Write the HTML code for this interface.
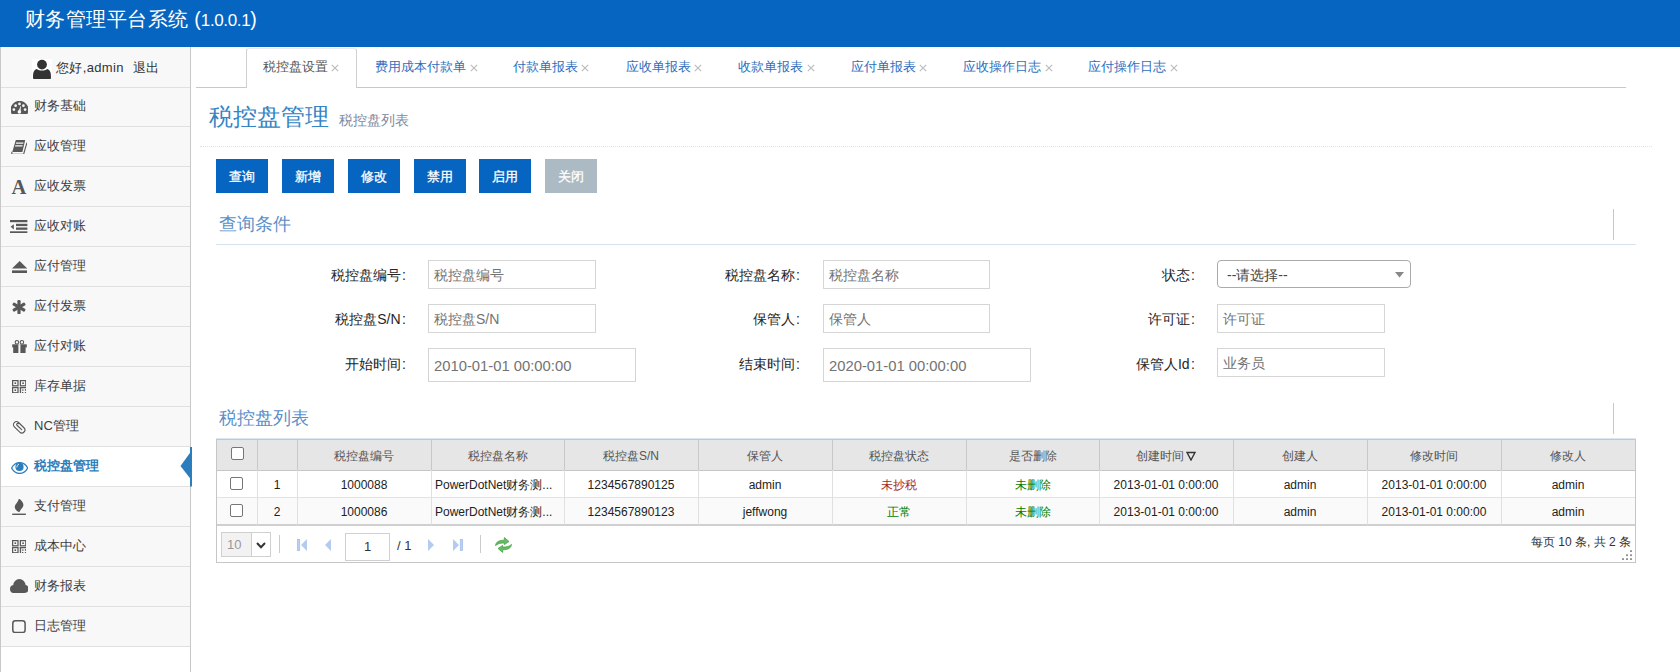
<!DOCTYPE html>
<html><head><meta charset="utf-8">
<style>
*{box-sizing:border-box;margin:0;padding:0}
html,body{width:1680px;height:672px;overflow:hidden;background:#fff;font-family:"Liberation Sans",sans-serif;font-size:13px;color:#393939}
.abs{position:absolute}
#hdr{position:absolute;left:0;top:0;width:1680px;height:47px;background:#0665c0}
#hdr .t{position:absolute;left:25px;top:7px;color:#fff;font-size:20.4px;line-height:24px;white-space:nowrap}
#hdr .t .cjk{letter-spacing:0.45px}
#hdr .t .ver{font-size:17px;letter-spacing:-0.35px}
#hdr .t .p{font-size:19.5px;letter-spacing:0}
#side{position:absolute;left:0;top:47px;width:191px;height:625px;background:#fff;border-left:1px solid #c8c8c8;border-right:1px solid #c8c8c8}
.user{position:absolute;left:0;top:0;width:189px;height:41px;background:#f8f8f8;border-bottom:1px solid #e0e0e0}
.mi{position:absolute;left:0;width:189px;height:40px;background:#f8f8f8;border-bottom:1px solid #e0e0e0;color:#3e3e3e}
.mi .tx{position:absolute;left:33px;top:12px;line-height:14px;font-size:13px;white-space:nowrap}
.mi svg{position:absolute;left:9px;top:12px}
.mi.act{background:#fff;color:#2b7dbc;font-weight:bold}
#tabs{position:absolute;left:196px;top:47px;width:1430px;height:41px;border-bottom:1px solid #c5c5c5}
.tab{position:absolute;top:1px;height:40px;white-space:nowrap;color:#2b6fc0;font-size:13px;line-height:14px}
.tab .tx{position:absolute;top:13px}
.tab .x{position:absolute;top:12px;color:#b8b8b8;font-size:13px}
.tab.act{border:1px solid #c5c5c5;border-bottom:1px solid #fff;border-radius:3px 3px 0 0;background:#fff;color:#555}
.ph{position:absolute;left:209px;top:103px;color:#3584c4;font-size:24px;line-height:28px;white-space:nowrap}
.ph small{font-size:14px;color:#8089a0;margin-left:10px}
.dot{position:absolute;left:200px;top:146px;width:1452px;border-top:1px dotted #e2e2e2}
.btn{position:absolute;top:159px;width:52px;height:34px;background:#0665c0;color:#fff;text-align:center;line-height:35px;font-size:13px}
.btn{-webkit-text-stroke:0.3px #fff}
.btn.dis{background:#abbac3}
.hd{position:absolute;left:219px;color:#5a8fc9;font-size:18px;line-height:22px;white-space:nowrap}
.hline{position:absolute;left:216px;width:1420px;border-top:1px solid #d5e3ef}
.vline{position:absolute;left:1614px;width:1px;background:#c8c8c8}
.lbl{position:absolute;white-space:nowrap;text-align:right;color:#262626;font-size:14px;line-height:16px}
.inp{position:absolute;border:1px solid #d5d5d5;background:#fff;color:#737373;font-size:14px;line-height:16px;padding-left:5px;white-space:nowrap}
.ico{position:absolute;line-height:0}
.ico svg{display:block}
.av{position:absolute;left:31px;top:12px;width:20px;height:20px;background:#fff}
.ut{position:absolute;left:55px;top:14px;line-height:14px;color:#333;white-space:nowrap}
.tri{position:absolute;left:179px;top:400px}
#tabline{position:absolute;left:196px;top:87px;width:1430px;height:1px;background:#c8c8c8}
.tabact{position:absolute;left:246px;top:48px;width:111px;height:40px;border:1px solid #d0d0d0;border-top-color:#ebebeb;border-bottom:none;border-radius:3px 3px 0 0;background:#fff}
.ttx{position:absolute;top:59px;line-height:16px;font-size:13px;color:#2e6ec0;white-space:nowrap}
.ttx.act{color:#555}
.tcl{position:absolute;top:64px;line-height:0}
.tcl svg{display:block}
.inp{padding-top:6px}
.inp.dt{font-size:14.8px;line-height:18px;padding-top:8px}
.sel{position:absolute;border:1px solid #aaa;border-radius:4px;background:#fff;color:#444;font-size:14px;line-height:16px;padding:6px 0 0 9px;white-space:nowrap}
.sel .arr{position:absolute;right:6px;top:11px}
#grid{position:absolute;left:0;top:0}
.gh{position:absolute;left:216px;top:439px;width:1420px;height:124px;border:1px solid #c6c6c6;background:#fff}
#grid .gh::before{content:"";position:absolute;left:0;top:0;width:1418px;height:30px;background:#e6e6e6;border-bottom:1px solid #c6c6c6}
.gr{position:absolute;left:217px;width:1418px;height:27px;border-bottom:1px solid #e2e2e2}
.gr.r1{top:471px;background:#fff}
.gr.r2{top:498px;background:#fafafa;border-bottom:2px solid #cfcfcf;height:28px}
.vd{position:absolute;top:440px;width:1px;height:85px;background:linear-gradient(#c8c8c8 0,#c8c8c8 30px,#e0e0e0 30px)}
.ht{position:absolute;top:449px;text-align:center;font-size:12px;line-height:14px;color:#555;white-space:nowrap}
.bt{position:absolute;font-size:12px;line-height:14px;color:#222;white-space:nowrap}
.cb{position:absolute;width:13px;height:13px;border:1px solid #767676;border-radius:2px;background:#fff}
.psel{position:absolute;left:221px;top:532px;width:50px;height:25px;border:1px solid #d0d0d0;background:#fff}
.psel .pv{position:absolute;left:0;top:0;width:30px;height:23px;background:#f2f2f2;color:#999;font-size:13px;line-height:23px;padding-left:5px}
.psel::after{content:"";position:absolute;left:29px;top:0;width:1px;height:23px;background:#d0d0d0}
.pdd{position:absolute;left:34px;top:9px}
.psep{position:absolute;top:535px;width:1px;height:18px;background:#ccc}
.pico{position:absolute}
.pinp{position:absolute;left:345px;top:533px;width:45px;height:28px;border:1px solid #d0d0d0;text-align:center;font-size:13px;line-height:26px;color:#333}
.pof{position:absolute;left:397px;top:538px;font-size:13px;line-height:16px;color:#333}
.pinfo{position:absolute;right:49px;top:535px;font-size:12px;line-height:14px;color:#333;white-space:nowrap}
.grip{position:absolute}
</style></head><body>
<div id="hdr"><div class="t"><span class="cjk">财务管理平台系统</span> <span class="ver"><span class="p">(</span>1.0.0.1<span class="p">)</span></span></div></div>

<div id="side">
  <div class="user"><div class="av"><svg viewBox="0 0 20 20" width="20" height="20"><circle cx="10" cy="5.6" r="4.9" fill="#333"/><path d="M1,19.2 C1,14.5 1.2,11.2 4.8,10 C6.2,11.2 8,11.6 10,11.6 C12,11.6 13.8,11.2 15.2,10 C18.8,11.2 19,14.5 19,19.2 Q19,20 18,20 H2 Q1,20 1,19.2 Z" fill="#333"/></svg></div><span class="ut" style="letter-spacing:0.35px">您好,admin</span><span class="ut" style="left:132px">退出</span></div>
  <div class="mi" style="top:41px;height:39px"><span class="tx" style="top:11px">财务基础</span></div>
  <div class="ico" style="left:9.6px;top:54.0px"><svg viewBox="0 0 17 13" width="17" height="13"><path d="M0.6,13 A8.96,8.96 0 1 1 16.4,13 Z" fill="#585858"/><g fill="#f8f8f8"><circle cx="8.5" cy="2.9" r="1.35"/><circle cx="4.6" cy="4.7" r="1.35"/><circle cx="12.4" cy="4.7" r="1.35"/><circle cx="2.9" cy="8.6" r="1.35"/><circle cx="14.1" cy="8.6" r="1.35"/><circle cx="8.4" cy="10.9" r="1.8"/><path d="M7.4,10.6 L9.6,5 L10,5.2 L9.4,11 Z"/></g></svg></div>
  <div class="mi" style="top:80px;height:40px"><span class="tx" style="top:12px">应收管理</span></div>
  <div class="ico" style="left:9.7px;top:92.5px"><svg viewBox="0 0 16.5 14.5" width="16.5" height="14.5"><path d="M4.8,0.1 H14.2 L11.4,11.9 H1.3 Z" fill="#585858"/><g fill="#f8f8f8" transform="skewX(-16.7)"><rect x="5.9" y="2.5" width="7.4" height="1.2"/><rect x="5.9" y="5.2" width="7.4" height="1.2"/></g><path d="M1.3,11.9 C0.6,12.4 0.6,13.2 1,14.3 H12.4" fill="none" stroke="#585858" stroke-width="1.1"/><path d="M15.9,2.6 L12.6,14.3" fill="none" stroke="#585858" stroke-width="1.1"/></svg></div>
  <div class="mi" style="top:120px;height:40px"><span class="tx" style="top:12px">应收发票</span></div>
  <div class="ico" style="left:9.8px;top:132.4px"><svg viewBox="0 0 16 14.5" width="16" height="14.5"><text x="8" y="14.5" text-anchor="middle" font-family="Liberation Serif" font-weight="bold" font-size="20.5" fill="#585858">A</text></svg></div>
  <div class="mi" style="top:160px;height:40px"><span class="tx" style="top:12px">应收对账</span></div>
  <div class="ico" style="left:9.3px;top:172.5px"><svg viewBox="0 0 17.4 13.5" width="17.4" height="13.5"><g fill="#585858"><rect x="0" y="0" width="17.4" height="2.2"/><rect x="6" y="3.8" width="11.4" height="2.3"/><rect x="6" y="7.5" width="11.4" height="2.3"/><rect x="0" y="11.3" width="17.4" height="2.2"/><path d="M0.6,6.8 L3.8,4.2 V9.4 Z"/></g></svg></div>
  <div class="mi" style="top:200px;height:40px"><span class="tx" style="top:12px">应付管理</span></div>
  <div class="ico" style="left:10.7px;top:213.7px"><svg viewBox="0 0 15.3 12.2" width="15.3" height="12.2"><g fill="#585858"><path d="M0,7.6 L7.65,0 L15.3,7.6 Z"/><rect x="0" y="9.4" width="15.3" height="2.8"/></g></svg></div>
  <div class="mi" style="top:240px;height:40px"><span class="tx" style="top:12px">应付发票</span></div>
  <div class="ico" style="left:10.7px;top:252.6px"><svg viewBox="0 0 14 14.2" width="14" height="14.2"><g fill="#585858" transform="translate(7 7.1)"><rect x="-1.6" y="-7.1" width="3.2" height="14.2" rx="1.2"/><rect x="-1.6" y="-7.1" width="3.2" height="14.2" rx="1.2" transform="rotate(60)"/><rect x="-1.6" y="-7.1" width="3.2" height="14.2" rx="1.2" transform="rotate(-60)"/></g></svg></div>
  <div class="mi" style="top:280px;height:40px"><span class="tx" style="top:12px">应付对账</span></div>
  <div class="ico" style="left:10.7px;top:292.8px"><svg viewBox="0 0 15.3 13.6" width="15.3" height="13.6"><g fill="#585858"><rect x="0.2" y="4.3" width="14.6" height="3.1"/><rect x="1.2" y="7" width="12.4" height="6.2"/></g><g fill="none" stroke="#585858" stroke-width="1.1"><circle cx="4.9" cy="2.3" r="1.75"/><circle cx="9.9" cy="2.3" r="1.75"/></g><rect x="6.4" y="4.3" width="2" height="8.9" fill="#f8f8f8"/></svg></div>
  <div class="mi" style="top:320px;height:40px"><span class="tx" style="top:12px">库存单据</span></div>
  <div class="ico" style="left:10.7px;top:332.5px"><svg viewBox="0 0 14.4 13.4" width="14.4" height="13.4"><g fill="none" stroke="#585858" stroke-width="1.25"><rect x="0.6" y="0.6" width="5.4" height="5.2"/><rect x="8.4" y="0.6" width="5.4" height="5.2"/><rect x="0.6" y="7.6" width="5.4" height="5.2"/></g><g fill="#585858"><rect x="2.5" y="2.4" width="1.6" height="1.6"/><rect x="10.3" y="2.4" width="1.6" height="1.6"/><rect x="2.5" y="9.4" width="1.6" height="1.6"/><rect x="7.8" y="7" width="1.3" height="6.4"/><rect x="7.8" y="7" width="6.6" height="1.3"/><rect x="10.2" y="9.4" width="1.3" height="1.4"/><rect x="12.9" y="9.2" width="1.5" height="1.6"/><rect x="10" y="12" width="1.3" height="1.4"/><rect x="12.9" y="12" width="1.5" height="1.4"/></g></svg></div>
  <div class="mi" style="top:360px;height:40px"><span class="tx" style="top:12px">NC管理</span></div>
  <div class="ico" style="left:10.7px;top:372.6px"><svg viewBox="0 0 14.3 14.6" width="14.3" height="14.6"><g transform="rotate(44 7.15 7.3)" fill="none" stroke="#585858" stroke-width="1.15"><rect x="0.4" y="4.3" width="13.5" height="6" rx="3"/><path d="M10.6,7.3 H4.2 A1.1,1.1 0 0 1 4.2,5.1" stroke-linecap="round"/></g></svg></div>
  <div class="mi act" style="top:400px;height:40px"><span class="tx" style="top:12px">税控盘管理</span></div>
  <div class="ico" style="left:9.7px;top:414.5px"><svg viewBox="0 0 17.3 12" width="17.3" height="12"><path d="M0.6,6 C2.6,2.3 5.5,0.6 8.65,0.6 C11.8,0.6 14.7,2.3 16.7,6 C14.7,9.7 11.8,11.4 8.65,11.4 C5.5,11.4 2.6,9.7 0.6,6 Z" fill="none" stroke="#2b7dbc" stroke-width="1.3"/><circle cx="8.5" cy="4.9" r="4.1" fill="#2b7dbc"/><path d="M5.9,5.4 C5.9,3.9 6.6,2.6 8,2.1" fill="none" stroke="#fff" stroke-width="0.9"/></svg></div>
  <div class="mi" style="top:440px;height:40px"><span class="tx" style="top:12px">支付管理</span></div>
  <div class="ico" style="left:10.9px;top:452.3px"><svg viewBox="0 0 14.3 16.2" width="14.3" height="16.2"><g fill="#585858"><path d="M6.8,-0.6 C9.2,1.2 11.6,3.4 11.4,6.2 C11.2,8.6 8.4,10.2 7.4,13.3 C4.5,12.1 2.6,10 2.8,7.8 C3,5 6.4,3.4 6.8,-0.6 Z"/><rect x="0.2" y="14.6" width="13.7" height="1.4"/></g></svg></div>
  <div class="mi" style="top:480px;height:40px"><span class="tx" style="top:12px">成本中心</span></div>
  <div class="ico" style="left:10.7px;top:492.5px"><svg viewBox="0 0 14.4 13.4" width="14.4" height="13.4"><g fill="none" stroke="#585858" stroke-width="1.25"><rect x="0.6" y="0.6" width="5.4" height="5.2"/><rect x="8.4" y="0.6" width="5.4" height="5.2"/><rect x="0.6" y="7.6" width="5.4" height="5.2"/></g><g fill="#585858"><rect x="2.5" y="2.4" width="1.6" height="1.6"/><rect x="10.3" y="2.4" width="1.6" height="1.6"/><rect x="2.5" y="9.4" width="1.6" height="1.6"/><rect x="7.8" y="7" width="1.3" height="6.4"/><rect x="7.8" y="7" width="6.6" height="1.3"/><rect x="10.2" y="9.4" width="1.3" height="1.4"/><rect x="12.9" y="9.2" width="1.5" height="1.6"/><rect x="10" y="12" width="1.3" height="1.4"/><rect x="12.9" y="12" width="1.5" height="1.4"/></g></svg></div>
  <div class="mi" style="top:520px;height:40px"><span class="tx" style="top:12px">财务报表</span></div>
  <div class="ico" style="left:8.8px;top:532.2px"><svg viewBox="0 0 18.5 14.1" width="18.5" height="14.1"><g fill="#585858"><circle cx="4.1" cy="10" r="4.1"/><circle cx="9.4" cy="6.3" r="6.2"/><circle cx="14.4" cy="9.9" r="4.1"/><rect x="4.1" y="9" width="10.3" height="5.1"/></g></svg></div>
  <div class="mi" style="top:560px;height:40px"><span class="tx" style="top:12px">日志管理</span></div>
  <div class="ico" style="left:11.1px;top:572.8px"><svg viewBox="0 0 13.9 13.4" width="13.9" height="13.4"><rect x="0.8" y="0.8" width="12.3" height="11.8" rx="2.6" fill="none" stroke="#585858" stroke-width="1.5"/></svg></div>
  <svg class="tri" width="12" height="40" viewBox="0 0 12 40"><path d="M0.5,19 L11,4.6 V32.4 Z" fill="#2b7dbc"/><rect x="10" y="0" width="2" height="39.5" fill="#2b7dbc"/></svg>
</div>

<div id="tabline"></div>
<div class="tabact"></div>
<div class="ttx act" style="left:262.5px">税控盘设置</div><div class="tcl" style="left:331px"><svg width="8" height="8" viewBox="0 0 8 8"><path d="M0.8,0.8 L7.2,7.2 M7.2,0.8 L0.8,7.2" stroke="#bdbdbd" stroke-width="1.2"/></svg></div>
<div class="ttx" style="left:375px">费用成本付款单</div><div class="tcl" style="left:470px"><svg width="8" height="8" viewBox="0 0 8 8"><path d="M0.8,0.8 L7.2,7.2 M7.2,0.8 L0.8,7.2" stroke="#bdbdbd" stroke-width="1.2"/></svg></div>
<div class="ttx" style="left:513.25px">付款单报表</div><div class="tcl" style="left:581px"><svg width="8" height="8" viewBox="0 0 8 8"><path d="M0.8,0.8 L7.2,7.2 M7.2,0.8 L0.8,7.2" stroke="#bdbdbd" stroke-width="1.2"/></svg></div>
<div class="ttx" style="left:625.75px">应收单报表</div><div class="tcl" style="left:694px"><svg width="8" height="8" viewBox="0 0 8 8"><path d="M0.8,0.8 L7.2,7.2 M7.2,0.8 L0.8,7.2" stroke="#bdbdbd" stroke-width="1.2"/></svg></div>
<div class="ttx" style="left:738px">收款单报表</div><div class="tcl" style="left:807px"><svg width="8" height="8" viewBox="0 0 8 8"><path d="M0.8,0.8 L7.2,7.2 M7.2,0.8 L0.8,7.2" stroke="#bdbdbd" stroke-width="1.2"/></svg></div>
<div class="ttx" style="left:850.75px">应付单报表</div><div class="tcl" style="left:919px"><svg width="8" height="8" viewBox="0 0 8 8"><path d="M0.8,0.8 L7.2,7.2 M7.2,0.8 L0.8,7.2" stroke="#bdbdbd" stroke-width="1.2"/></svg></div>
<div class="ttx" style="left:963px">应收操作日志</div><div class="tcl" style="left:1044.5px"><svg width="8" height="8" viewBox="0 0 8 8"><path d="M0.8,0.8 L7.2,7.2 M7.2,0.8 L0.8,7.2" stroke="#bdbdbd" stroke-width="1.2"/></svg></div>
<div class="ttx" style="left:1088px">应付操作日志</div><div class="tcl" style="left:1170px"><svg width="8" height="8" viewBox="0 0 8 8"><path d="M0.8,0.8 L7.2,7.2 M7.2,0.8 L0.8,7.2" stroke="#bdbdbd" stroke-width="1.2"/></svg></div>

<div class="ph">税控盘管理<small>税控盘列表</small></div>
<div class="dot"></div>

<div class="btn" style="left:216px">查询</div>
<div class="btn" style="left:282px">新增</div>
<div class="btn" style="left:348px">修改</div>
<div class="btn" style="left:414px">禁用</div>
<div class="btn" style="left:479px">启用</div>
<div class="btn dis" style="left:545px">关闭</div>

<div class="hd" style="top:213px">查询条件</div>
<div class="hline" style="top:244px"></div>
<div class="vline" style="top:209px;height:31px;left:1613px"></div>


<div class="lbl" style="right:1274px;top:267px">税控盘编号<span style="margin-left:1.5px">:</span></div>
<div class="inp" style="left:428px;top:260px;width:168px;height:29px">税控盘编号</div>
<div class="lbl" style="right:880px;top:267px">税控盘名称<span style="margin-left:1.5px">:</span></div>
<div class="inp" style="left:823px;top:260px;width:167px;height:29px">税控盘名称</div>
<div class="lbl" style="right:485px;top:267px">状态<span style="margin-left:1.5px">:</span></div>
<div class="sel" style="left:1217px;top:260px;width:194px;height:28px">--请选择--<svg class="arr" width="9" height="6" viewBox="0 0 9 6"><path d="M0,0 H9 L4.5,5.5 Z" fill="#888"/></svg></div>

<div class="lbl" style="right:1274px;top:311px">税控盘S/N<span style="margin-left:1.5px">:</span></div>
<div class="inp" style="left:428px;top:304px;width:168px;height:29px">税控盘S/N</div>
<div class="lbl" style="right:880px;top:311px">保管人<span style="margin-left:1.5px">:</span></div>
<div class="inp" style="left:823px;top:304px;width:167px;height:29px">保管人</div>
<div class="lbl" style="right:485px;top:311px">许可证<span style="margin-left:1.5px">:</span></div>
<div class="inp" style="left:1217px;top:304px;width:168px;height:29px">许可证</div>

<div class="lbl" style="right:1274px;top:356px">开始时间<span style="margin-left:1.5px">:</span></div>
<div class="inp dt" style="left:428px;top:348px;width:208px;height:34px">2010-01-01 00:00:00</div>
<div class="lbl" style="right:880px;top:356px">结束时间<span style="margin-left:1.5px">:</span></div>
<div class="inp dt" style="left:823px;top:348px;width:208px;height:34px">2020-01-01 00:00:00</div>
<div class="lbl" style="right:485px;top:356px">保管人Id<span style="margin-left:1.5px">:</span></div>
<div class="inp" style="left:1217px;top:348px;width:168px;height:29px">业务员</div>

<div class="hd" style="top:407px">税控盘列表</div>
<div class="hline" style="top:438px;width:1420px;border-top-color:#dbe7f2"></div>
<div class="vline" style="top:403px;height:31px;left:1613px"></div>

<div id="grid">
<div class="gh"></div><div class="gr r1"></div><div class="gr r2"></div>
<div class="vd" style="left:257px"></div>
<div class="vd" style="left:297px"></div>
<div class="vd" style="left:431px"></div>
<div class="vd" style="left:564px"></div>
<div class="vd" style="left:698px"></div>
<div class="vd" style="left:832px"></div>
<div class="vd" style="left:966px"></div>
<div class="vd" style="left:1099px"></div>
<div class="vd" style="left:1233px"></div>
<div class="vd" style="left:1367px"></div>
<div class="vd" style="left:1501px"></div>
<div class="cb" style="left:231px;top:447px"></div>
<div class="ht" style="left:297px;width:134px">税控盘编号</div>
<div class="ht" style="left:431px;width:133px">税控盘名称</div>
<div class="ht" style="left:564px;width:134px">税控盘S/N</div>
<div class="ht" style="left:698px;width:134px">保管人</div>
<div class="ht" style="left:832px;width:134px">税控盘状态</div>
<div class="ht" style="left:966px;width:133px">是否删除</div>
<div class="ht" style="left:1099px;width:134px">创建时间<svg style="margin-left:2px;vertical-align:-1px" width="10" height="10" viewBox="0 0 10 10"><path d="M1,1.5 H9 L5,9 Z" fill="none" stroke="#333" stroke-width="1.4" stroke-linejoin="miter"/></svg></div>
<div class="ht" style="left:1233px;width:134px">创建人</div>
<div class="ht" style="left:1367px;width:134px">修改时间</div>
<div class="ht" style="left:1501px;width:134px">修改人</div>
<div class="cb" style="left:230px;top:477px"></div>
<div class="bt" style="left:257px;width:40px;top:478px;text-align:center;">1</div>
<div class="bt" style="left:297px;width:134px;top:478px;text-align:center;">1000088</div>
<div class="bt" style="left:431px;width:133px;top:478px;text-align:left;padding-left:4px;">PowerDotNet财务测...</div>
<div class="bt" style="left:564px;width:134px;top:478px;text-align:center;">1234567890125</div>
<div class="bt" style="left:698px;width:134px;top:478px;text-align:center;">admin</div>
<div class="bt" style="left:832px;width:134px;top:478px;text-align:center;"><span style="color:#a52a2a">未抄税</span></div>
<div class="bt" style="left:966px;width:133px;top:478px;text-align:center;"><span style="color:#008000">未删除</span></div>
<div class="bt" style="left:1099px;width:134px;top:478px;text-align:center;">2013-01-01 0:00:00</div>
<div class="bt" style="left:1233px;width:134px;top:478px;text-align:center;">admin</div>
<div class="bt" style="left:1367px;width:134px;top:478px;text-align:center;">2013-01-01 0:00:00</div>
<div class="bt" style="left:1501px;width:134px;top:478px;text-align:center;">admin</div>
<div class="cb" style="left:230px;top:504px"></div>
<div class="bt" style="left:257px;width:40px;top:505px;text-align:center;">2</div>
<div class="bt" style="left:297px;width:134px;top:505px;text-align:center;">1000086</div>
<div class="bt" style="left:431px;width:133px;top:505px;text-align:left;padding-left:4px;">PowerDotNet财务测...</div>
<div class="bt" style="left:564px;width:134px;top:505px;text-align:center;">1234567890123</div>
<div class="bt" style="left:698px;width:134px;top:505px;text-align:center;">jeffwong</div>
<div class="bt" style="left:832px;width:134px;top:505px;text-align:center;"><span style="color:#008000">正常</span></div>
<div class="bt" style="left:966px;width:133px;top:505px;text-align:center;"><span style="color:#008000">未删除</span></div>
<div class="bt" style="left:1099px;width:134px;top:505px;text-align:center;">2013-01-01 0:00:00</div>
<div class="bt" style="left:1233px;width:134px;top:505px;text-align:center;">admin</div>
<div class="bt" style="left:1367px;width:134px;top:505px;text-align:center;">2013-01-01 0:00:00</div>
<div class="bt" style="left:1501px;width:134px;top:505px;text-align:center;">admin</div>
</div>
<div class="psel"><span class="pv">10</span><svg class="pdd" width="10" height="7" viewBox="0 0 10 7"><path d="M1,1 L5,5.2 L9,1" fill="none" stroke="#333" stroke-width="2"/></svg></div>
<div class="psep" style="left:279px"></div>
<svg class="pico" style="left:297px;top:539px" width="11" height="12" viewBox="0 0 11 12"><rect x="0.5" y="0.5" width="2.2" height="11" fill="#bcd0f2" stroke="#a3bce8" stroke-width="0.8"/><path d="M10,0 V12 L4,6 Z" fill="#b4caf0"/></svg>
<svg class="pico" style="left:325px;top:539px" width="6" height="12" viewBox="0 0 6 12"><path d="M6,0 V12 L0,6 Z" fill="#b4caf0"/></svg>
<div class="pinp">1</div>
<div class="pof">/ 1</div>
<svg class="pico" style="left:428px;top:539px" width="6" height="12" viewBox="0 0 6 12"><path d="M0,0 V12 L6,6 Z" fill="#b4caf0"/></svg>
<svg class="pico" style="left:453px;top:539px" width="10" height="12" viewBox="0 0 10 12"><path d="M0,0 V12 L6,6 Z" fill="#b4caf0"/><rect x="7.3" y="0.5" width="2.2" height="11" fill="#bcd0f2" stroke="#a3bce8" stroke-width="0.8"/></svg>
<div class="psep" style="left:480px"></div>
<svg class="pico" style="left:495px;top:537px" width="17" height="16" viewBox="0 0 17 16"><g fill="#66bb66" stroke="#3f9e3f" stroke-width="0.7" stroke-linejoin="round"><path d="M0.5,8.6 C1,4.8 4,3.2 9.3,3.2 V0.5 L14,4.5 L9.3,7.6 V5.9 C5.5,5.9 2.8,6.6 0.5,8.6 Z"/><path d="M16.5,7.4 C16,11.2 13,12.8 7.7,12.8 V15.5 L3,11.5 L7.7,8.4 V10.1 C11.5,10.1 14.2,9.4 16.5,7.4 Z"/></g></svg>
<div class="pinfo">每页 10 条, 共 2 条</div>
<svg class="grip" style="left:1620px;top:548px" width="14" height="14" viewBox="0 0 14 14"><g fill="#888"><rect x="10.1" y="2.2" width="1.8" height="1.8"/><rect x="6.1" y="6.3" width="1.8" height="1.8"/><rect x="10.1" y="6.3" width="1.8" height="1.8"/><rect x="2.1" y="10.2" width="1.8" height="1.8"/><rect x="6.1" y="10.2" width="1.8" height="1.8"/><rect x="10.1" y="10.2" width="1.8" height="1.8"/></g></svg>

</body></html>
